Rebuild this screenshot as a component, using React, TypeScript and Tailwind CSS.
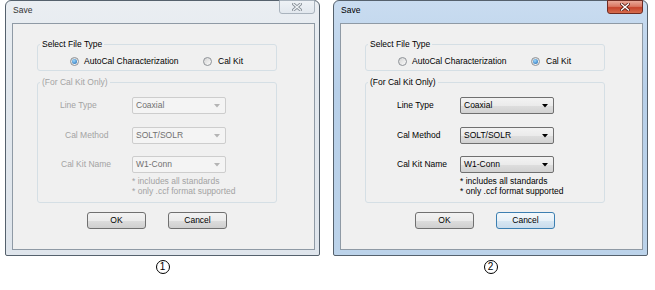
import React from "react"

type Props = {
    n: number
    active: boolean
    kit: boolean
    labelPads: number[]
}

const ROWS = [
    { label: 'Line Type', value: 'Coaxial' },
    { label: 'Cal Method', value: 'SOLT/SOLR' },
    { label: 'Cal Kit Name', value: 'W1-Conn' },
]

function Radio({ checked }: { checked: boolean }) {
    return (
        <span className="flex items-center justify-center w-[9px] h-[9px] rounded-full border border-[#8e9297] bg-[linear-gradient(135deg,#d4d4d4,#fbfbfb)] shrink-0">
            {checked && (
                <span className="w-[5px] h-[5px] rounded-full bg-[radial-gradient(circle_at_40%_35%,#9ad8ff,#1d64ad)]" />
            )}
        </span>
    )
}

function Select({ value, enabled }: { value: string; enabled: boolean }) {
    return (
        <div
            className={`flex items-center justify-between w-[94px] h-[17px] border rounded-[2px] pl-[3px] pr-[5px] ${
                enabled
                    ? 'border-[#707070] bg-[linear-gradient(180deg,#f3f3f3_0%,#ebebeb_50%,#dedede_51%,#d2d2d2_100%)] text-black'
                    : 'border-[#cdcdcd] bg-[#f4f4f4] text-[#707070]'
            }`}
        >
            <span>{value}</span>
            <svg width="6" height="4" viewBox="0 0 6 4">
                <path d="M0 0 L6 0 L3 3.5 Z" fill={enabled ? '#000' : '#b4b4b4'} />
            </svg>
        </div>
    )
}

function CloseButton({ active }: { active: boolean }) {
    return (
        <div
            className={`flex items-center justify-center w-[36px] h-[14px] -mt-[1px] border rounded-b-[3px] ${
                active
                    ? 'border-[#6e2b22] bg-[linear-gradient(180deg,#e9a898_0%,#da7863_45%,#c6432b_55%,#d66d4e_100%)]'
                    : 'border-[#a9b3bd] bg-[linear-gradient(180deg,#eef2f6_0%,#e2e8ee_100%)]'
            }`}
        >
            <svg width="10" height="8" viewBox="0 0 10 8">
                <path d="M1.5 1 L8.5 7 M8.5 1 L1.5 7" stroke={active ? '#5a1d15' : '#858d96'} strokeWidth="3" strokeLinecap="square" />
                <path d="M1.5 1 L8.5 7 M8.5 1 L1.5 7" stroke={active ? '#ffffff' : '#eef2f5'} strokeWidth="1.4" strokeLinecap="square" />
            </svg>
        </div>
    )
}

function Dialog({ n, active, kit, labelPads }: Props) {
    const dim = kit ? 'text-black' : 'text-[#a3a3a3]'
    return (
        <div className="flex flex-col items-center">
            <div
                className={`flex flex-col w-[315px] h-[256px] border border-[#55616d] rounded-t-[6px] rounded-b-[2px] pl-[6px] pr-[4px] pb-[5px] ${
                    active
                        ? 'bg-[linear-gradient(180deg,#c9dcf0_0%,#b8d0e9_35%,#bcd3ea_100%)]'
                        : 'bg-[linear-gradient(180deg,#eaeef2_0%,#e2e8ee_35%,#dfe5ec_100%)]'
                }`}
            >
                <div className="flex items-start justify-between h-[22px]">
                    <span className={`pt-[4px] pl-[1px] leading-[10px] ${active ? 'text-black' : 'text-[#333]'}`}>Save</span>
                    <CloseButton active={active} />
                </div>
                <div className="flex-1 flex flex-col border border-[#8f9aa5] bg-[#f0f0f0]">
                    <fieldset className="ml-[24px] mt-[15px] w-[240px] border border-[#d5dfe5] rounded-[3px] pt-[7px] pb-[4px]">
                        <legend className="ml-[2px] px-[2px] leading-[10px] text-black">Select File Type</legend>
                        <div className="flex items-center h-[10px] leading-[10px] text-black">
                            <div className="flex items-center gap-[5px] ml-[32px] w-[133px]">
                                <Radio checked={!kit} />
                                <span>AutoCal Characterization</span>
                            </div>
                            <div className="flex items-center gap-[6px]">
                                <Radio checked={kit} />
                                <span>Cal Kit</span>
                            </div>
                        </div>
                    </fieldset>
                    <fieldset className="ml-[24px] mt-[6px] w-[240px] border border-[#d5dfe5] rounded-[3px] pt-[10px] pb-[6px]">
                        <legend className={`ml-[2px] px-[2px] leading-[10px] ${dim}`}>(For Cal Kit Only)</legend>
                        {ROWS.map((r, i) => (
                            <div key={r.label} className={`flex items-center ${i === 0 ? '' : i === 1 ? 'mt-[13px]' : 'mt-[12px]'}`}>
                                <span className={`w-[94px] ${dim}`} style={{ paddingLeft: labelPads[i] }}>
                                    {r.label}
                                </span>
                                <Select value={r.value} enabled={kit} />
                            </div>
                        ))}
                        <div className={`ml-[94px] mt-[3px] leading-[10px] ${kit ? 'text-black' : 'text-[#a3a3a3]'}`}>
                            <div>* includes all standards</div>
                            <div>* only .ccf format supported</div>
                        </div>
                    </fieldset>
                    <div className="flex gap-[22px] ml-[74px] mt-[9px]">
                        <button className="w-[59px] h-[17px] border border-[#707070] rounded-[3px] bg-[linear-gradient(180deg,#f2f2f2_0%,#ebebeb_50%,#dddddd_51%,#cfcfcf_100%)] text-black leading-none">
                            OK
                        </button>
                        <button
                            className={`w-[59px] h-[17px] border rounded-[3px] text-black leading-none ${
                                active
                                    ? 'border-[#3c7fb1] bg-[linear-gradient(180deg,#f3f8fb_0%,#e8f1f8_50%,#d8e7f3_51%,#cadcec_100%)]'
                                    : 'border-[#707070] bg-[linear-gradient(180deg,#f2f2f2_0%,#ebebeb_50%,#dddddd_51%,#cfcfcf_100%)]'
                            }`}
                        >
                            Cancel
                        </button>
                    </div>
                </div>
            </div>
            <div className="mt-[4px] flex items-center justify-center w-[14px] h-[14px] rounded-full border border-black text-[10px] leading-none text-black">
                {n}
            </div>
        </div>
    )
}

export default function App() {
    return (
        <div className="flex gap-[13px] pl-[5px] w-[655px] h-[290px] bg-white font-['Liberation_Sans',Arial,sans-serif] text-[8.5px]">
            <Dialog n={1} active={false} kit={false} labelPads={[22, 27, 23]} />
            <Dialog n={2} active={true} kit={true} labelPads={[31, 31, 31]} />
        </div>
    )
}
